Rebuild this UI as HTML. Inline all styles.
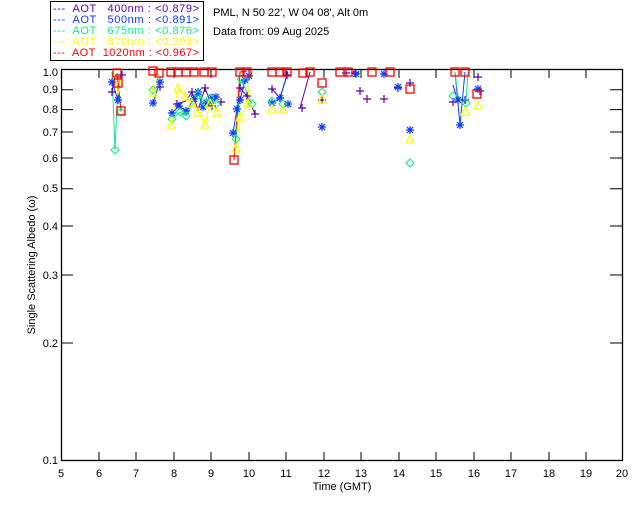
<!DOCTYPE html>
<html><head><meta charset="utf-8"><style>
body{margin:0;background:#fff;width:640px;height:512px;overflow:hidden}
svg{display:block}
text{font-family:"Liberation Sans",sans-serif;font-size:11px;white-space:pre}
</style></head><body>
<svg width="640" height="512" viewBox="0 0 640 512">
<defs>
<g id="p"><path d="M-4 0H4M0 -4V4" stroke="#5a00a8" stroke-width="1.2" fill="none"/></g>
<g id="s"><path d="M-4 0H4M0 -4V4M-3 -3L3 3M-3 3L3 -3" stroke="#0a3cff" stroke-width="1.2" fill="none"/></g>
<g id="d"><path d="M0 -4L4 0L0 4L-4 0Z" stroke="#10e88a" stroke-width="1" fill="none"/></g>
<g id="t"><path d="M0 -5L4 3H-4Z" stroke="#ffff00" stroke-width="1.2" fill="none"/></g>
<g id="q"><rect x="-4" y="-4" width="8" height="8" stroke="#ff0000" stroke-width="1.3" fill="none"/></g>
</defs>
<!-- legend -->
<rect x="50.5" y="1.5" width="153" height="59" fill="none" stroke="#000"/>
<g font-size="10.5">
<text x="53" y="12" fill="#5a00a8" textLength="146" lengthAdjust="spacing">---  AOT   400nm : &lt;0.879&gt;</text>
<text x="53" y="23" fill="#0a3cff" textLength="146" lengthAdjust="spacing">---  AOT   500nm : &lt;0.891&gt;</text>
<text x="53" y="34" fill="#10e88a" textLength="146" lengthAdjust="spacing">---  AOT   675nm : &lt;0.876&gt;</text>
<text x="53" y="45" fill="#ffff00" textLength="146" lengthAdjust="spacing">---  AOT   870nm : &lt;0.903&gt;</text>
<text x="53" y="56" fill="#ff0000" textLength="146" lengthAdjust="spacing">---  AOT  1020nm : &lt;0.967&gt;</text>
</g>
<text x="213" y="16">PML, N 50 22', W 04 08', Alt 0m</text>
<text x="213" y="35">Data from: 09 Aug 2025</text>
<!-- frame -->
<rect x="61.5" y="69.5" width="561" height="391" fill="none" stroke="#000" stroke-width="1.3"/>
<g stroke="#000" stroke-width="1">
<path d="M99 460v-8M136 460v-8M174 460v-8M211 460v-8M249 460v-8M286 460v-8M324 460v-8M361 460v-8M399 460v-8M436 460v-8M474 460v-8M511 460v-8M549 460v-8M586 460v-8"/>
<path d="M99 70v8M136 70v8M174 70v8M211 70v8M249 70v8M286 70v8M324 70v8M361 70v8M399 70v8M436 70v8M474 70v8M511 70v8M549 70v8M586 70v8"/>
<path d="M61 89.8h12M61 109.6h12M61 132h12M61 158h12M61 188.8h12M61 226h12M61 275h12M61 343h12"/>
<path d="M622 89.8h-12M622 109.6h-12M622 132h-12M622 158h-12M622 188.8h-12M622 226h-12M622 275h-12M622 343h-12"/>
</g>
<g text-anchor="end" font-size="10.5">
<text x="58" y="76">1.0</text><text x="58" y="93">0.9</text><text x="58" y="113">0.8</text><text x="58" y="136">0.7</text><text x="58" y="162">0.6</text><text x="58" y="192">0.5</text><text x="58" y="230">0.4</text><text x="58" y="279">0.3</text><text x="58" y="347">0.2</text><text x="58" y="464">0.1</text>
</g>
<g text-anchor="middle" font-size="10.5">
<text x="61" y="477">5</text><text x="99" y="477">6</text><text x="136" y="477">7</text><text x="174" y="477">8</text><text x="211" y="477">9</text><text x="249" y="477">10</text><text x="286" y="477">11</text><text x="324" y="477">12</text><text x="361" y="477">13</text><text x="399" y="477">14</text><text x="436" y="477">15</text><text x="474" y="477">16</text><text x="511" y="477">17</text><text x="549" y="477">18</text><text x="586" y="477">19</text><text x="622" y="477">20</text>
<text x="342" y="490">Time (GMT)</text>
<text transform="translate(35,265) rotate(-90)">Single Scattering Albedo (ω)</text>
</g>
<!-- lines -->
<g fill="none" stroke-width="1">
<polyline stroke="#10e88a" points="112,72 115,150 118,82 121,112"/>
<polyline stroke="#5a00a8" points="112,92 115,75 122,75"/>
<polyline stroke="#0a3cff" points="112,82 118,100 121,72"/>
<polyline stroke="#ff0000" points="117,73 118,82 121,111"/>
<polyline stroke="#ffff00" points="114,73 118,95 121,78"/>
<polyline stroke="#0a3cff" points="153,103 160,82"/>
<polyline stroke="#ffff00" points="153,92 159,73"/>
<polyline stroke="#5a00a8" points="177,104 186,101 192,92 198,110 205,88 212,106 216,98"/>
<polyline stroke="#0a3cff" points="172,113 179,106 186,111 194,99 198,92 203,107 207,103 212,98 216,97"/>
<polyline stroke="#10e88a" points="172,119 180,112 186,116 198,95 205,103 210,98 216,104"/>
<polyline stroke="#ffff00" points="171,126 178,88 185,96 192,103 198,112 205,124 210,103 217,112"/>
<polyline stroke="#ff0000" points="234,160 240,72 247,71"/>
<polyline stroke="#0a3cff" points="233,133 237,109 240,100 245,80 249,76"/>
<polyline stroke="#10e88a" points="236,139 241,79 252,104"/>
<polyline stroke="#ffff00" points="236,148 240,117 248,103 250,72"/>
<polyline stroke="#5a00a8" points="240,88 247,96 255,114"/>
<polyline stroke="#5a00a8" points="272,89 280,98 287,75"/>
<polyline stroke="#0a3cff" points="272,103 280,98 288,72"/>
<polyline stroke="#5a00a8" points="300,108 310,72"/>
<polyline stroke="#5a00a8" points="453,85 458,102"/>
<polyline stroke="#0a3cff" points="455,72 460,125 465,72"/>
<polyline stroke="#10e88a" points="455,72 458,96 466,103 468,72"/>
</g>
<!-- markers -->
<g>
<use href="#p" x="112" y="92"/><use href="#p" x="122" y="75"/><use href="#p" x="160" y="87"/><use href="#p" x="192" y="92"/><use href="#p" x="177" y="104"/><use href="#p" x="205" y="88"/><use href="#p" x="212" y="106"/><use href="#p" x="221" y="102"/><use href="#p" x="240" y="88"/><use href="#p" x="247" y="96"/><use href="#p" x="255" y="114"/><use href="#p" x="272" y="89"/><use href="#p" x="280" y="98"/><use href="#p" x="287" y="75"/><use href="#p" x="302" y="108"/><use href="#p" x="322" y="100"/><use href="#p" x="346" y="73"/><use href="#p" x="355" y="73"/><use href="#p" x="360" y="91"/><use href="#p" x="367" y="99"/><use href="#p" x="384" y="99"/><use href="#p" x="398" y="88"/><use href="#p" x="410" y="83"/><use href="#p" x="453" y="102"/><use href="#p" x="465" y="100"/><use href="#p" x="478" y="77"/><use href="#p" x="480" y="91"/>
<use href="#s" x="112" y="82"/><use href="#s" x="118" y="100"/><use href="#s" x="153" y="103"/><use href="#s" x="160" y="82"/><use href="#s" x="172" y="113"/><use href="#s" x="179" y="106"/><use href="#s" x="186" y="111"/><use href="#s" x="194" y="99"/><use href="#s" x="198" y="92"/><use href="#s" x="203" y="107"/><use href="#s" x="207" y="103"/><use href="#s" x="212" y="98"/><use href="#s" x="216" y="97"/><use href="#s" x="233" y="133"/><use href="#s" x="237" y="109"/><use href="#s" x="240" y="100"/><use href="#s" x="245" y="80"/><use href="#s" x="249" y="76"/><use href="#s" x="272" y="103"/><use href="#s" x="280" y="98"/><use href="#s" x="288" y="104"/><use href="#s" x="322" y="127"/><use href="#s" x="398" y="87"/><use href="#s" x="410" y="130"/><use href="#s" x="458" y="100"/><use href="#s" x="460" y="125"/><use href="#s" x="478" y="89"/><use href="#s" x="384" y="74"/><use href="#s" x="356" y="74"/>
<use href="#d" x="115" y="150"/><use href="#d" x="121" y="112"/><use href="#d" x="153" y="90"/><use href="#d" x="172" y="119"/><use href="#d" x="180" y="112"/><use href="#d" x="186" y="116"/><use href="#d" x="198" y="95"/><use href="#d" x="205" y="103"/><use href="#d" x="210" y="98"/><use href="#d" x="216" y="104"/><use href="#d" x="236" y="139"/><use href="#d" x="241" y="79"/><use href="#d" x="252" y="104"/><use href="#d" x="272" y="101"/><use href="#d" x="283" y="104"/><use href="#d" x="322" y="92"/><use href="#d" x="410" y="163"/><use href="#d" x="453" y="96"/><use href="#d" x="466" y="103"/>
<use href="#t" x="153" y="93"/><use href="#t" x="171" y="126"/><use href="#t" x="178" y="89"/><use href="#t" x="185" y="97"/><use href="#t" x="192" y="104"/><use href="#t" x="198" y="113"/><use href="#t" x="205" y="125"/><use href="#t" x="210" y="104"/><use href="#t" x="217" y="113"/><use href="#t" x="236" y="149"/><use href="#t" x="240" y="118"/><use href="#t" x="248" y="104"/><use href="#t" x="272" y="110"/><use href="#t" x="283" y="110"/><use href="#t" x="322" y="100"/><use href="#t" x="410" y="140"/><use href="#t" x="465" y="112"/><use href="#t" x="478" y="106"/>
<use href="#q" x="117" y="73"/><use href="#q" x="118" y="83"/><use href="#q" x="121" y="111"/><use href="#q" x="153" y="71"/><use href="#q" x="159" y="73"/><use href="#q" x="171" y="72"/><use href="#q" x="178" y="72"/><use href="#q" x="186" y="72"/><use href="#q" x="194" y="72"/><use href="#q" x="204" y="72"/><use href="#q" x="212" y="72"/><use href="#q" x="234" y="160"/><use href="#q" x="240" y="72"/><use href="#q" x="247" y="72"/><use href="#q" x="272" y="72"/><use href="#q" x="280" y="72"/><use href="#q" x="287" y="72"/><use href="#q" x="303" y="73"/><use href="#q" x="310" y="72"/><use href="#q" x="322" y="83"/><use href="#q" x="340" y="72"/><use href="#q" x="348" y="72"/><use href="#q" x="372" y="72"/><use href="#q" x="390" y="72"/><use href="#q" x="410" y="89"/><use href="#q" x="455" y="72"/><use href="#q" x="465" y="72"/><use href="#q" x="477" y="94"/>
</g>
</svg>
</body></html>
